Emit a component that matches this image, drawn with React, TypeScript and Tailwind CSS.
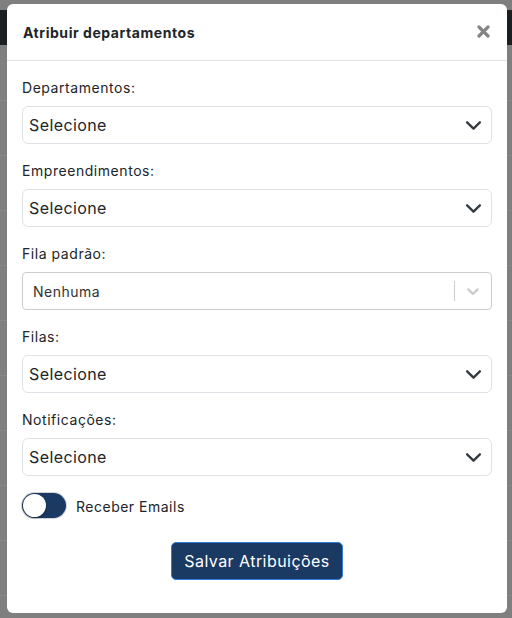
import React from "react";

const Chevron = () => (
  <svg width="17" height="17" viewBox="0 0 16 16" fill="none">
    <path d="m2 5 6 6 6-6" stroke="#343a40" strokeWidth="2.2" strokeLinecap="round" strokeLinejoin="round" />
  </svg>
);

const Select = () => (
  <div className="h-[38px] w-full rounded-[6px] border border-[#dee2e6] bg-white flex items-center justify-between pl-[6px] pr-[9px]">
    <span className="text-[16px] text-[#212529] tracking-[0.4px]">Selecione</span>
    <Chevron />
  </div>
);

const Group = ({ label, children }: { label: string; children: React.ReactNode }) => (
  <div className="mb-4">
    <div className="text-[14px] leading-[21px] text-[#212529] mb-2 tracking-[0.55px]">{label}</div>
    {children}
  </div>
);

export default function App() {
  const rows = [100, 155, 210, 265, 320, 375, 430, 485, 540, 595];
  return (
    <div
      className="relative h-[618px] w-[512px] overflow-hidden bg-[#7f7f7f]"
      style={{ fontFamily: "Inter, 'Liberation Sans', sans-serif" }}
    >
      <div className="flex flex-col">
        <div className="h-[10px]" />
        <div className="h-[35px] bg-[#1c1f22]" />
        <div className="h-[55px]" />
        {rows.map((r) => (
          <div key={r} className="h-[55px] border-t border-[#878787]" />
        ))}
      </div>

      <div className="absolute left-[7px] top-[4px] w-[500px] h-[609px] bg-white rounded-[6px] flex flex-col">
        <div className="h-[57px] border-b border-[#dee2e6] flex items-center justify-between pl-4 pr-[16px]">
          <span className="text-[14px] font-bold text-[#212529] tracking-[0.55px]">Atribuir departamentos</span>
          <svg width="13" height="13" viewBox="0 0 13 13" className="mr-[1px] -mt-[2px]">
            <path d="M2 2 L11 11 M11 2 L2 11" stroke="#858585" strokeWidth="3.2" strokeLinecap="round" />
          </svg>
        </div>
        <div className="px-[15px] pt-4 flex flex-col">
          <Group label="Departamentos:">
            <Select />
          </Group>
          <Group label="Empreendimentos:">
            <Select />
          </Group>
          <Group label="Fila padrão:">
            <div className="h-[38px] w-full rounded-[4px] border border-[#cccccc] bg-white flex items-center">
              <span className="flex-1 pl-[10px] text-[14px] text-[#333333] tracking-[0.5px]">Nenhuma</span>
              <div className="w-px h-[20px] bg-[#cccccc]" />
              <div className="px-[8px] flex items-center">
                <svg width="20" height="20" viewBox="0 0 20 20" fill="#cccccc">
                  <path d="M4.516 7.548c0.436-0.446 1.043-0.481 1.576 0l3.908 3.747 3.908-3.747c0.533-0.481 1.141-0.446 1.574 0 0.436 0.445 0.408 1.197 0 1.615-0.406 0.418-4.695 4.502-4.695 4.502-0.217 0.223-0.502 0.335-0.787 0.335s-0.57-0.112-0.789-0.335c0 0-4.287-4.084-4.695-4.502s-0.436-1.170 0-1.615z" />
                </svg>
              </div>
            </div>
          </Group>
          <Group label="Filas:">
            <Select />
          </Group>
          <Group label="Notificações:">
            <Select />
          </Group>
          <div className="flex items-center gap-[10px] mt-[1px]">
            <div className="relative w-[44px] h-[25px] rounded-full bg-[#1a3a63] shadow-[0_0_0_1px_#d0d4d9]">
              <div className="absolute left-[1px] top-[1px] w-[23px] h-[23px] rounded-full bg-white shadow-[0_1px_2px_rgba(0,0,0,0.4)]" />
            </div>
            <span className="text-[14px] text-[#212529] tracking-[0.5px] mt-[2px]">Receber Emails</span>
          </div>
          <div className="flex justify-center mt-[24px]">
            <button className="h-[38px] px-[12px] rounded-[5px] bg-[#1a3a63] border border-[#2f7de0] text-white text-[16px] tracking-[0.45px]">
              Salvar Atribuições
            </button>
          </div>
        </div>
      </div>
    </div>
  );
}
